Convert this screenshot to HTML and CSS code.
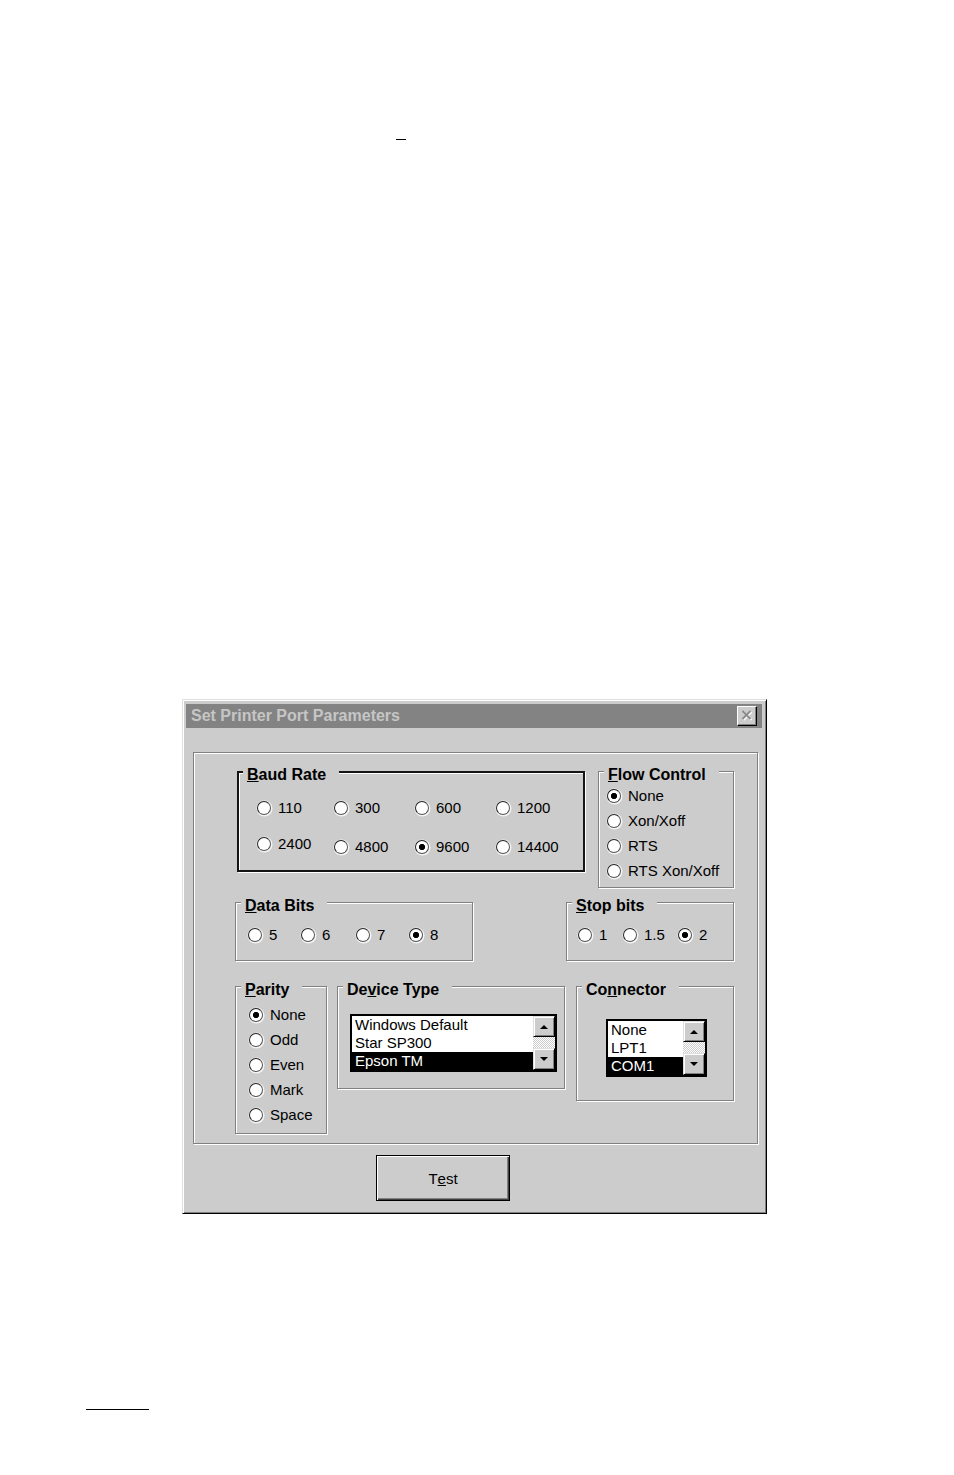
FILE: index.html
```html
<!DOCTYPE html>
<html>
<head>
<meta charset="utf-8">
<title>Set Printer Port Parameters</title>
<link rel="stylesheet" href="styles.css">
</head>
<body>
<div class="page">
  <div class="mark-top"></div>
  <div class="dialog">
    <div class="titlebar">
      <span class="title">Set Printer Port Parameters</span>
      <span class="close">
        <svg width="18" height="18" viewBox="0 0 18 18">
          <path d="M4.5 4 L12.5 12 M12.5 4 L4.5 12" stroke="#ffffff" stroke-width="1.8" transform="translate(1 1)"/>
          <path d="M4.5 4 L12.5 12 M12.5 4 L4.5 12" stroke="#8a8a8a" stroke-width="1.8"/>
        </svg>
      </span>
    </div>
    <div class="panel">
      <div class="row row1">
        <div class="group dark baud">
          <div class="legend"><u>B</u>aud Rate</div>
          <div class="baud-grid">
            <div class="opt"><span class="radio"></span><span>110</span></div>
            <div class="opt"><span class="radio"></span><span>300</span></div>
            <div class="opt"><span class="radio"></span><span>600</span></div>
            <div class="opt"><span class="radio"></span><span>1200</span></div>
            <div class="opt raised"><span class="radio"></span><span>2400</span></div>
            <div class="opt"><span class="radio"></span><span>4800</span></div>
            <div class="opt"><span class="radio on"></span><span>9600</span></div>
            <div class="opt"><span class="radio"></span><span>14400</span></div>
          </div>
        </div>
        <div class="group flow">
          <div class="legend"><u>F</u>low Control</div>
          <div class="vlist">
            <div class="opt"><span class="radio on"></span><span>None</span></div>
            <div class="opt"><span class="radio"></span><span>Xon/Xoff</span></div>
            <div class="opt"><span class="radio"></span><span>RTS</span></div>
            <div class="opt"><span class="radio"></span><span>RTS Xon/Xoff</span></div>
          </div>
        </div>
      </div>
      <div class="row row2">
        <div class="group databits">
          <div class="legend"><u>D</u>ata Bits</div>
          <div class="data-grid">
            <div class="opt"><span class="radio"></span><span>5</span></div>
            <div class="opt"><span class="radio"></span><span>6</span></div>
            <div class="opt"><span class="radio"></span><span>7</span></div>
            <div class="opt"><span class="radio on"></span><span>8</span></div>
          </div>
        </div>
        <div class="group stopbits">
          <div class="legend"><u>S</u>top bits</div>
          <div class="stop-grid">
            <div class="opt"><span class="radio"></span><span>1</span></div>
            <div class="opt"><span class="radio"></span><span>1.5</span></div>
            <div class="opt"><span class="radio on"></span><span>2</span></div>
          </div>
        </div>
      </div>
      <div class="row row3">
        <div class="group parity">
          <div class="legend"><u>P</u>arity</div>
          <div class="vlist">
            <div class="opt"><span class="radio on"></span><span>None</span></div>
            <div class="opt"><span class="radio"></span><span>Odd</span></div>
            <div class="opt"><span class="radio"></span><span>Even</span></div>
            <div class="opt"><span class="radio"></span><span>Mark</span></div>
            <div class="opt"><span class="radio"></span><span>Space</span></div>
          </div>
        </div>
        <div class="group device">
          <div class="legend">De<u>v</u>ice Type</div>
          <div class="listbox device-list">
            <div class="items">
              <div class="item">Windows Default</div>
              <div class="item">Star SP300</div>
              <div class="item sel">Epson TM</div>
            </div>
            <div class="sb">
              <div class="sb-btn up"><span class="arrow-up"></span></div>
              <div class="sb-track"></div>
              <div class="sb-btn down"><span class="arrow-down"></span></div>
            </div>
          </div>
        </div>
        <div class="group connector">
          <div class="legend">Co<u>n</u>nector</div>
          <div class="listbox conn-list">
            <div class="items">
              <div class="item">None</div>
              <div class="item">LPT1</div>
              <div class="item sel">COM1</div>
            </div>
            <div class="sb">
              <div class="sb-btn up"><span class="arrow-up"></span></div>
              <div class="sb-track"></div>
              <div class="sb-btn down"><span class="arrow-down"></span></div>
            </div>
          </div>
        </div>
      </div>
    </div>
    <div class="btn">T<u>e</u>st</div>
  </div>
  <div class="mark-bottom"></div>
</div>
</body>
</html>
```
FILE: styles.css
```css
html, body {
  margin: 0;
  padding: 0;
  background: #ffffff;
}
body {
  font-family: "Liberation Sans", Arial, sans-serif;
  font-size: 15px;
  color: #000;
}
.page {
  width: 954px;
  height: 1475px;
  overflow: hidden;
}
.mark-top {
  margin: 139px 0 0 396px;
  width: 10px;
  height: 1px;
  background: #000;
}
.mark-bottom {
  margin: 195px 0 0 86px;
  width: 63px;
  height: 1px;
  background: #000;
}
.dialog {
  box-sizing: border-box;
  margin: 559px 0 0 182px;
  width: 585px;
  height: 515px;
  background: #cccccc;
  border: 1px solid;
  border-color: #dfdfdf #000 #000 #dfdfdf;
  box-shadow: inset 1px 1px 0 #fff, inset -1px -1px 0 #808080;
  padding: 4px 4px 0 3px;
}
.titlebar {
  height: 24px;
  background: #838383;
  color: #c6c6c6;
  display: flex;
  align-items: center;
  justify-content: space-between;
  padding: 0 5px;
}
.title {
  font-weight: bold;
  font-size: 16px;
  line-height: 24px;
}
.close {
  box-sizing: border-box;
  width: 20px;
  height: 20px;
  background: #cccccc;
  border: 1px solid;
  border-color: #fff #000 #000 #fff;
  box-shadow: inset -1px -1px 0 #808080;
  display: flex;
}
.close svg {
  display: block;
}
.panel {
  box-sizing: border-box;
  margin: 24px 4px 0 7px;
  width: 565px;
  height: 392px;
  border: 1px solid #808080;
  box-shadow: inset 1px 1px 0 #fff, 1px 1px 0 #fff;
  padding-top: 18px;
}
.row {
  display: flex;
  align-items: flex-start;
}
.row2 { margin-top: 14px; }
.row3 { margin-top: 25px; }

.group {
  box-sizing: border-box;
  border: 1px solid #808080;
  box-shadow: inset 1px 1px 0 #fff, 1px 1px 0 #fff;
}
.group.dark {
  border: 2px solid #141414;
}
.legend {
  width: fit-content;
  background: #cccccc;
  font-weight: bold;
  font-size: 16px;
  line-height: 16px;
  margin: -5px 0 0 5px;
  padding: 0 13px 0 4px;
  white-space: nowrap;
}
.group.dark .legend {
  margin: -6px 0 0 4px;
}
.opt {
  display: flex;
  align-items: center;
  gap: 7px;
  white-space: nowrap;
  line-height: 20px;
}
.radio {
  box-sizing: border-box;
  flex: none;
  width: 14px;
  height: 14px;
  border-radius: 50%;
  border: 1.5px solid;
  border-color: #222 #555 #555 #222;
  background: #fff;
  box-shadow: 0.5px 0.5px 0 1px #f4f4f4;
}
.radio.on {
  background: radial-gradient(circle, #000 0 2.8px, #fff 3.4px);
}

/* Baud rate */
.baud {
  margin-left: 43px;
  width: 348px;
  height: 101px;
}
.baud-grid {
  display: grid;
  grid-template-columns: 77px 81px 81px auto;
  grid-auto-rows: 20px;
  row-gap: 19px;
  margin-top: 15px;
  padding-left: 18px;
}
.raised {
  margin-top: -3px;
  margin-bottom: 3px;
}

/* Flow control */
.flow {
  margin-left: 13px;
  width: 136px;
  height: 117px;
}
.vlist {
  padding-left: 8px;
}
.vlist .opt {
  height: 25px;
  line-height: 25px;
}

/* Data bits */
.databits {
  margin-left: 41px;
  width: 238px;
  height: 59px;
}
.data-grid {
  display: grid;
  grid-template-columns: 53px 55px 53px auto;
  margin-top: 11px;
  padding-left: 12px;
}

/* Stop bits */
.stopbits {
  margin-left: 93px;
  width: 168px;
  height: 59px;
}
.stop-grid {
  display: grid;
  grid-template-columns: 45px 55px auto;
  margin-top: 11px;
  padding-left: 11px;
}

/* Parity */
.parity {
  margin-left: 41px;
  width: 92px;
  height: 148px;
}
.parity .vlist {
  margin-top: 4px;
  padding-left: 13px;
}

/* Device type */
.device {
  margin-left: 10px;
  width: 228px;
  height: 103px;
}
.connector {
  margin-left: 11px;
  width: 158px;
  height: 115px;
}
.listbox {
  box-sizing: border-box;
  display: flex;
  height: 58px;
  border: 2px solid #000;
  background: #fff;
}
.device-list {
  width: 207px;
  margin: 16px 0 0 12px;
}
.conn-list {
  width: 101px;
  margin: 21px 0 0 29px;
}
.items {
  flex: 1;
  min-width: 0;
  overflow: hidden;
}
.item {
  height: 18px;
  line-height: 18px;
  padding-left: 3px;
  white-space: nowrap;
}
.item.sel {
  background: #000;
  color: #fff;
}
.sb {
  width: 22px;
  flex: none;
  display: flex;
  flex-direction: column;
}
.sb-btn {
  box-sizing: border-box;
  background: #cccccc;
  border: 1px solid;
  border-color: #dfdfdf #000 #000 #dfdfdf;
  box-shadow: inset 1px 1px 0 #fff, inset -1px -1px 0 #808080;
  display: flex;
  align-items: center;
  justify-content: center;
}
.sb-btn.up { height: 21px; }
.sb-btn.down { height: 22px; }
.sb-track {
  flex: 1;
  background: repeating-conic-gradient(#ffffff 0 25%, #cccccc 0 50%) 0 0 / 2px 2px;
}
.arrow-up {
  width: 0;
  height: 0;
  border-left: 4px solid transparent;
  border-right: 4px solid transparent;
  border-bottom: 4px solid #000;
}
.arrow-down {
  width: 0;
  height: 0;
  border-left: 4px solid transparent;
  border-right: 4px solid transparent;
  border-top: 4px solid #000;
}

/* Button */
.btn {
  box-sizing: border-box;
  margin: 11px 0 0 190px;
  width: 134px;
  height: 46px;
  border: 1px solid #000;
  box-shadow: inset 1px 1px 0 #fff, inset -1px -1px 0 #404040, inset -2px -2px 0 #808080;
  display: flex;
  align-items: center;
  justify-content: center;
  font-size: 15px;
}
```
